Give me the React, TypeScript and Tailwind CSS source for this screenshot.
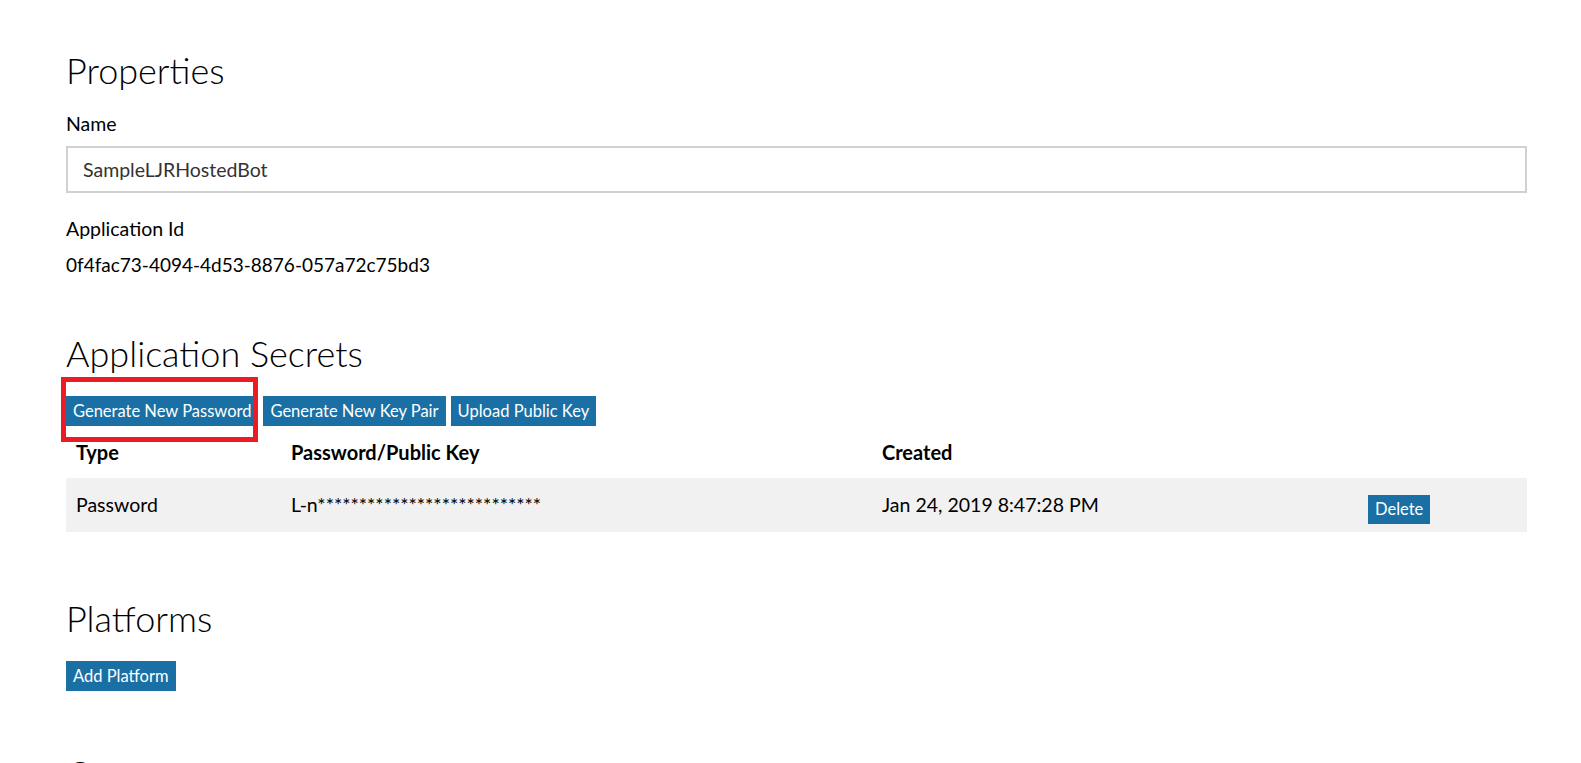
import React from "react";

const btn =
	"h-[30px] bg-[#1a6fa5] px-[7px] text-[16.5px] leading-[30px] text-white whitespace-nowrap";

const SectionTitle = ({ children, className }: { children: React.ReactNode; className?: string }) => (
	<h2 className={"text-[36px] font-light leading-[45px] text-black " + (className ?? "")}>
		{children}
	</h2>
);

const App = () => {
	const secrets = [
		{
			type: "Password",
			key: "L-n***************************",
			created: "Jan 24, 2019 8:47:28 PM",
		},
	];

	return (
		<div className="h-[763px] overflow-hidden bg-white font-['Lato',sans-serif] text-black">
			<div className="ml-[66px] w-[1461px]">
				{/* Properties */}
				<SectionTitle className="pt-[48px]">Properties</SectionTitle>

				<label className="mt-[17px] block text-[19.5px] leading-[28px]">Name</label>
				<input
					type="text"
					defaultValue="SampleLJRHostedBot"
					className="mt-[8px] block h-[47px] w-full border-2 border-[#d1d1d1] px-[15px] text-[19.5px] text-[#333] outline-none"
				/>

				<p className="mt-[22px] text-[19.5px] leading-[28px]">Application Id</p>
				<p className="mt-[8px] text-[19px] leading-[28px]">
					0f4fac73-4094-4d53-8876-057a72c75bd3
				</p>

				{/* Application Secrets */}
				<SectionTitle className="mt-[52px]">Application Secrets</SectionTitle>

				<div className="relative mt-[20px] flex gap-[5px]">
					<button type="button" className={btn}>
						Generate New Password
					</button>
					<button type="button" className={btn}>
						Generate New Key Pair
					</button>
					<button type="button" className={btn}>
						Upload Public Key
					</button>
					<div className="pointer-events-none absolute -left-[5px] -top-[19px] h-[65px] w-[197px] border-[5px] border-[#ed1c24]" />
				</div>

				<div className="grid h-[52px] grid-cols-[215px_591px_486px_1fr] pt-[12px] text-[20px] font-bold leading-[28px]">
					<div className="pl-[10px]">Type</div>
					<div className="pl-[10px]">Password/Public Key</div>
					<div className="pl-[10px]">Created</div>
					<div />
				</div>

				{secrets.map((s) => (
					<div
						key={s.key}
						className="grid h-[54px] grid-cols-[215px_591px_486px_1fr] bg-[#f1f1f1] text-[19.5px] leading-[28px]"
					>
						<div className="pl-[10px] pt-[13px]">{s.type}</div>
						<div className="pl-[10px] pt-[13px]">{s.key}</div>
						<div className="pl-[10px] pt-[13px]">{s.created}</div>
						<div className="pl-[10px] pt-[16px]">
							<button
								type="button"
								className="h-[29px] bg-[#1a6fa5] px-[7px] text-[16.5px] leading-[29px] text-white"
							>
								Delete
							</button>
						</div>
					</div>
				))}

				{/* Platforms */}
				<SectionTitle className="mt-[64px]">Platforms</SectionTitle>
				<div className="mt-[20px] flex">
					<button type="button" className={btn}>
						Add Platform
					</button>
				</div>

				{/* Owners */}
				<SectionTitle className="mt-[60px]">Owners</SectionTitle>
			</div>
		</div>
	);
};

export default App;
